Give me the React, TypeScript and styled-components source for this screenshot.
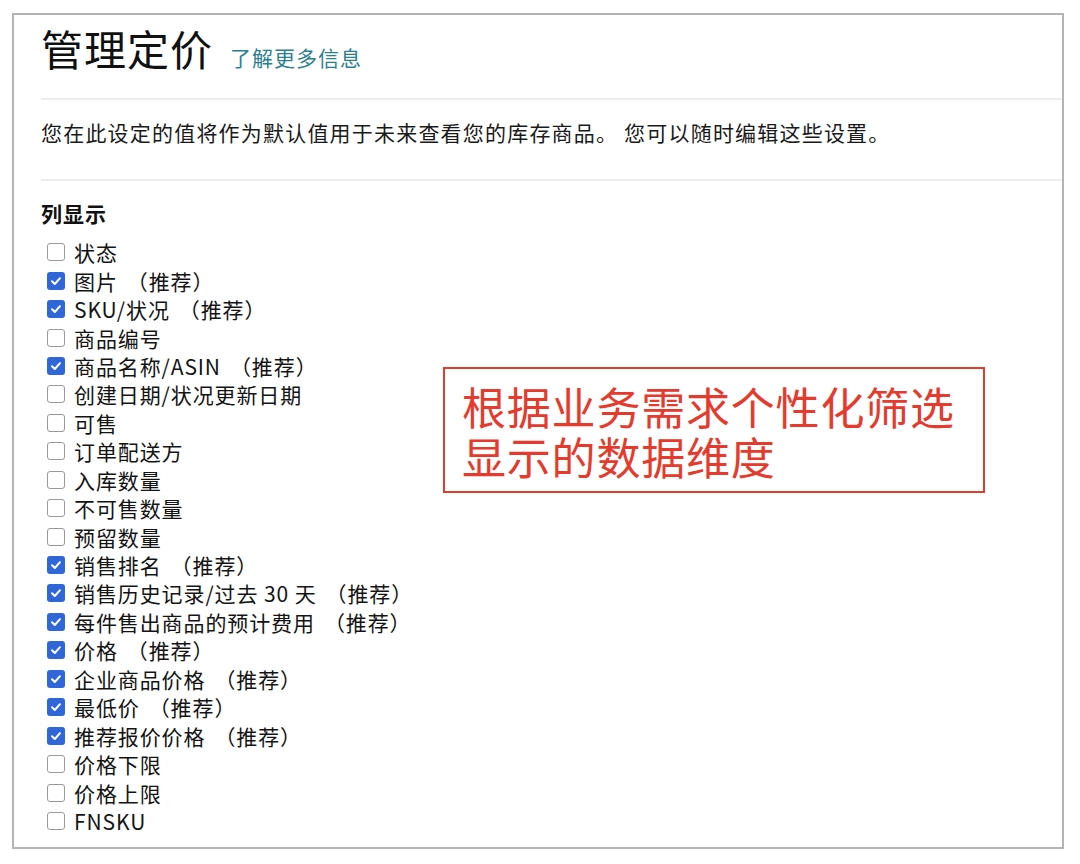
import styled, { createGlobalStyle } from 'styled-components';

const GlobalStyle = createGlobalStyle`
  html, body {
    margin: 0;
    padding: 0;
    background: #ffffff;
  }
  body {
    font-family: "Noto Sans CJK SC", "Noto Sans", "Liberation Sans", sans-serif;
    color: #141414;
  }
`;

const Frame = styled.div`
  position: relative;
  box-sizing: border-box;
  margin: 13px 0 0 12px;
  width: 1052px;
  height: 836px;
  border: 2px solid #b4b4b4;
  padding-left: 27px;
  overflow: hidden;
`;

const Header = styled.div`
  display: flex;
  align-items: baseline;
  gap: 17px;
  height: 83px;
  box-sizing: border-box;
  padding-top: 8px;
`;

const Title = styled.h1`
  margin: 0;
  font-size: 42px;
  font-weight: 400;
  line-height: 50px;
  letter-spacing: 1px;
  color: #111;
`;

const MoreLink = styled.a`
  font-size: 21px;
  letter-spacing: 1px;
  color: #2b7f8f;
  text-decoration: none;
  cursor: pointer;
`;

const Divider = styled.div`
  height: 2px;
  background: #ececec;
`;

const Description = styled.p`
  margin: 0;
  height: 79px;
  display: flex;
  align-items: center;
  padding-bottom: 16px;
  box-sizing: border-box;
  font-size: 21px;
  letter-spacing: 1.2px;
  color: #1a1a1a;
`;

const SectionTitle = styled.h2`
  margin: 18px 0 11px;
  font-size: 21px;
  line-height: 28px;
  font-weight: 700;
  letter-spacing: 1px;
  color: #111;
`;

const List = styled.ul`
  list-style: none;
  margin: 0;
  padding: 0 0 0 6px;
  display: flex;
  flex-direction: column;
`;

const Row = styled.li`
  display: flex;
  align-items: center;
  gap: 9px;
  height: 28.45px;
  font-size: 21px;
  letter-spacing: 0.9px;
  color: #141414;
`;

const Box = styled.span<{ $checked: boolean }>`
  flex: none;
  box-sizing: border-box;
  width: 18px;
  height: 18px;
  border-radius: 3px;
  display: flex;
  align-items: center;
  justify-content: center;
  background: ${p => (p.$checked ? '#2f66d8' : '#ffffff')};
  border: ${p => (p.$checked ? 'none' : '1.5px solid #9a9a9a')};
`;

const Hint = styled.span`
  margin-left: 9px;
`;

const Callout = styled.div`
  position: absolute;
  left: 429px;
  top: 352px;
  width: 542px;
  height: 126px;
  box-sizing: border-box;
  border: 2px solid #e53a2c;
  padding: 12px 0 0 17px;
  font-size: 44px;
  line-height: 50px;
  color: #e53a2c;
  letter-spacing: 0.8px;
`;

const Check = () => (
  <svg width="12" height="12" viewBox="0 0 12 12">
    <path d="M2 6.3 L4.8 9 L10 3.2" fill="none" stroke="#fff" strokeWidth="2" strokeLinecap="round" strokeLinejoin="round" />
  </svg>
);

const columns: { label: string; checked: boolean }[] = [
  { label: '状态', checked: false },
  { label: '图片', checked: true },
  { label: 'SKU/状况', checked: true },
  { label: '商品编号', checked: false },
  { label: '商品名称/ASIN', checked: true },
  { label: '创建日期/状况更新日期', checked: false },
  { label: '可售', checked: false },
  { label: '订单配送方', checked: false },
  { label: '入库数量', checked: false },
  { label: '不可售数量', checked: false },
  { label: '预留数量', checked: false },
  { label: '销售排名', checked: true },
  { label: '销售历史记录/过去 30 天', checked: true },
  { label: '每件售出商品的预计费用', checked: true },
  { label: '价格', checked: true },
  { label: '企业商品价格', checked: true },
  { label: '最低价', checked: true },
  { label: '推荐报价价格', checked: true },
  { label: '价格下限', checked: false },
  { label: '价格上限', checked: false },
  { label: 'FNSKU', checked: false },
];

export default function App() {
  return (
    <>
      <GlobalStyle />
      <Frame>
        <Header>
          <Title>管理定价</Title>
          <MoreLink>了解更多信息</MoreLink>
        </Header>
        <Divider />
        <Description>您在此设定的值将作为默认值用于未来查看您的库存商品。 您可以随时编辑这些设置。</Description>
        <Divider />
        <SectionTitle>列显示</SectionTitle>
        <List>
          {columns.map(c => (
            <Row key={c.label}>
              <Box $checked={c.checked}>{c.checked && <Check />}</Box>
              <span>
                {c.label}
                {c.checked && <Hint>（推荐）</Hint>}
              </span>
            </Row>
          ))}
        </List>
        <Callout>
          根据业务需求个性化筛选
          <br />
          显示的数据维度
        </Callout>
      </Frame>
    </>
  );
}
